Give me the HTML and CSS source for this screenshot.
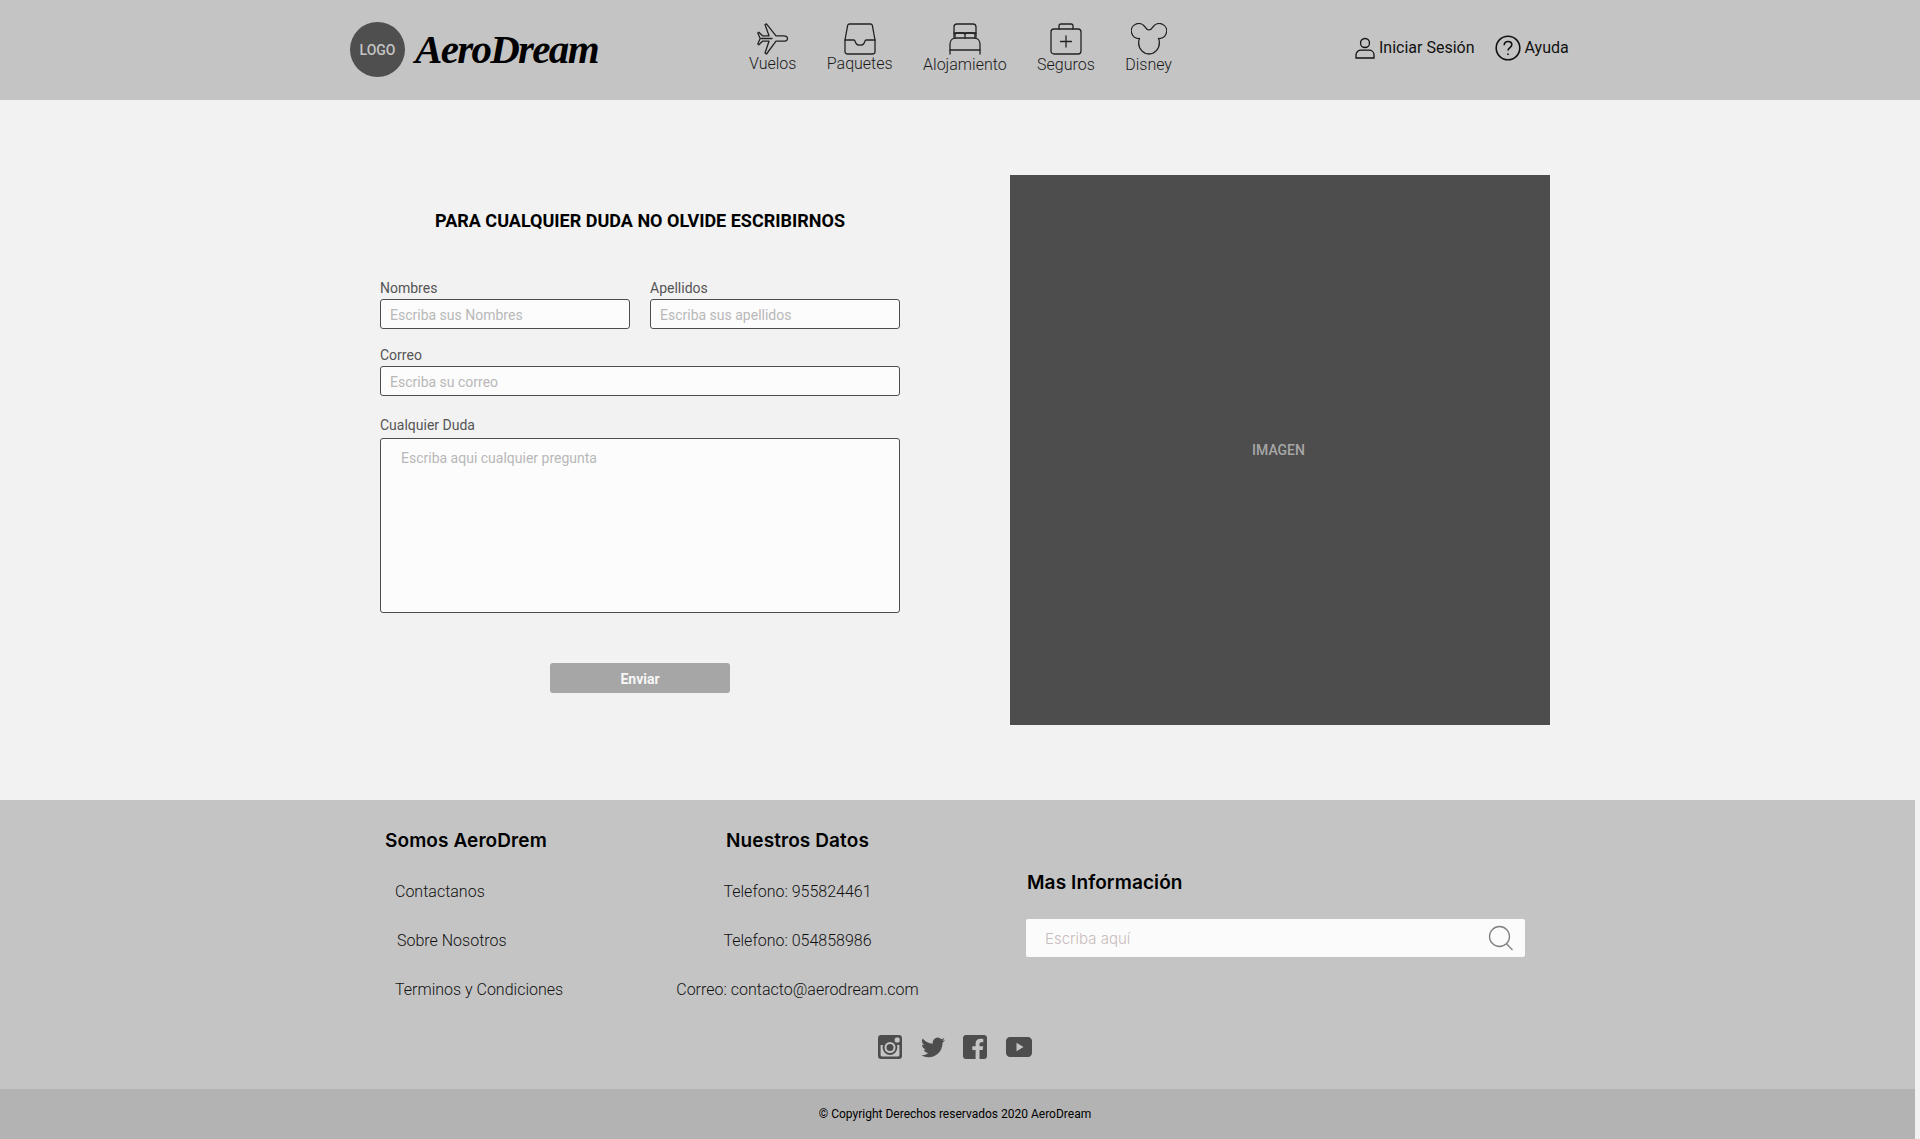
FILE: index.html
```html
<!DOCTYPE html>
<html lang="es">
<head>
<meta charset="utf-8">
<title>AeroDream</title>
<link rel="stylesheet" href="styles.css">
</head>
<body>
<header class="topbar">
  <div class="brand">
    <div class="logo">LOGO</div>
    <div class="wordmark">AeroDream</div>
  </div>
  <nav class="nav">
    <a class="nav-item">
      <svg class="nav-icon" width="32" height="32" viewBox="0 0 32 32"><path d="M30.5 15.5C30.5 13.6 28.5 12.8 26.5 12.8H19L9.5.8 8 1.5l4 11.3H5.5L1.8 9.2.8 10l2.4 5.5L.8 21l1 .8 3.7-3.6H12L8 30l1.5 1L19 18.2h7.5c2 0 4-.8 4-2.700z"/><path d="M4 15.500h11"/></svg>
      <span>Vuelos</span>
    </a>
    <a class="nav-item">
      <svg class="nav-icon" width="32" height="32" viewBox="0 0 32 32"><path d="M5.500 1h21c1 0 1.700.7 1.900 1.700L31 17v11.500c0 1.400-1.100 2.500-2.500 2.500h-25C2.100 31 1 29.900 1 28.500V17L3.600 2.700C3.800 1.700 4.500 1 5.500 1z"/><path d="M1 17h8.500c1 0 1.500.6 1.700 1.500.6 2.300 2.500 3.700 4.800 3.700s4.200-1.400 4.800-3.700c.2-.9.7-1.500 1.700-1.500H31"/></svg>
      <span>Paquetes</span>
    </a>
    <a class="nav-item nav-low">
      <svg class="nav-icon" width="32" height="32" viewBox="0 0 32 32"><path d="M5 14V4c0-1.700 1.300-3 3-3h16c1.700 0 3 1.300 3 3v10"/><path d="M5 10h22"/><path d="M6 15v-3c0-1.100.9-2 2-2h6c1.100 0 2 .9 2 2v3M16 15v-3c0-1.100.9-2 2-2h6c1.100 0 2 .9 2 2v3"/><path d="M1 31V21c0-3.500 2.500-6 6-6h18c3.500 0 6 2.500 6 6v10"/><path d="M1 27h30"/></svg>
      <span>Alojamiento</span>
    </a>
    <a class="nav-item nav-low">
      <svg class="nav-icon" width="32" height="32" viewBox="0 0 32 32"><rect x="1" y="6" width="30" height="25" rx="3"/><path d="M9 6V3c0-1.100.9-2 2-2h10c1.100 0 2 .9 2 2v3"/><path d="M16 13v11M10.500 18.500h11"/></svg>
      <span>Seguros</span>
    </a>
    <a class="nav-item nav-low">
      <svg class="nav-icon" width="36" height="32" viewBox="0 0 36 32"><path d="M8.500 15.500A7.500 7.500 0 1 1 14 3.800c1.200 2 2.500 3 4 3s2.800-1 4-3a7.500 7.500 0 1 1 5.500 11.700c.6 1.300.9 2.500.9 4C28.400 26 23.800 31 18 31S7.600 26 7.600 19.500c0-1.500.3-2.700.9-4z"/></svg>
      <span>Disney</span>
    </a>
  </nav>
  <div class="account">
    <a class="account-item">
      <svg width="20" height="22" viewBox="0 0 20 22"><circle cx="10" cy="6" r="4.500"/><path d="M1 21v-3c0-3 2.500-4.800 5-4.800h8c2.500 0 5 1.800 5 4.800v3z"/></svg>
      <span>Iniciar Sesión</span>
    </a>
    <a class="account-item account-help">
      <svg width="26" height="26" viewBox="0 0 26 26"><circle cx="13" cy="13" r="11.800"/><path d="M9.200 10.200c0-2.200 1.700-3.700 3.900-3.700s3.700 1.400 3.700 3.300c0 2.700-3.800 2.900-3.800 5.800"/><path d="M13 18.500v1.600"/></svg>
      <span>Ayuda</span>
    </a>
  </div>
</header>

<main class="content">
  <section class="contact">
    <h1 class="contact-title">PARA CUALQUIER DUDA NO OLVIDE ESCRIBIRNOS</h1>
    <form class="form">
      <div class="row">
        <label class="field"><span class="label">Nombres</span><input class="input" placeholder="Escriba sus Nombres"></label>
        <label class="field"><span class="label">Apellidos</span><input class="input" placeholder="Escriba sus apellidos"></label>
      </div>
      <label class="field field-mail"><span class="label">Correo</span><input class="input" placeholder="Escriba su correo"></label>
      <label class="field field-doubt"><span class="label">Cualquier Duda</span><textarea class="textarea" placeholder="Escriba aqui cualquier pregunta"></textarea></label>
      <button class="submit" type="button">Enviar</button>
    </form>
  </section>
  <div class="picture">IMAGEN</div>
</main>

<footer class="footer">
  <div class="footer-cols">
    <div class="col col-about">
      <h2 class="col-title">Somos AeroDrem</h2>
      <a class="link">Contactanos</a>
      <a class="link link-shift">Sobre Nosotros</a>
      <a class="link">Terminos y Condiciones</a>
    </div>
    <div class="col col-data">
      <h2 class="col-title">Nuestros Datos</h2>
      <a class="link">Telefono: 955824461</a>
      <a class="link">Telefono: 054858986</a>
      <a class="link">Correo: contacto@aerodream.com</a>
    </div>
    <div class="col col-info">
      <h2 class="col-title">Mas Información</h2>
      <div class="search">
        <input class="search-input" placeholder="Escriba aquí">
        <svg width="26" height="26" viewBox="0 0 26 26"><circle cx="11.500" cy="11.500" r="10"/><path d="M18.500 18.800 24.500 25"/></svg>
      </div>
    </div>
  </div>
  <div class="social">
    <svg width="24" height="24" viewBox="0 0 24 24"><path fill-rule="evenodd" d="M3 0h18c1.700 0 3 1.300 3 3v18c0 1.700-1.300 3-3 3H3c-1.700 0-3-1.300-3-3V3C0 1.300 1.300 0 3 0zm15.500 2.500a1.800 1.800 0 0 0-1.800 1.800v1.400c0 1 .8 1.800 1.800 1.800h1.400c1 0 1.800-.8 1.800-1.800V4.300c0-1-.8-1.800-1.800-1.800zM12 7a5.500 5.500 0 1 0 0 11 5.500 5.500 0 0 0 0-11zM2.600 10v10c0 .8.600 1.400 1.400 1.400h16c.8 0 1.400-.6 1.400-1.400V10h-2.500c.3.800.5 1.600.5 2.500a7.400 7.400 0 1 1-14.800 0c0-.9.200-1.700.5-2.500z"/><circle cx="12" cy="12.500" r="3.500"/></svg>
    <svg width="24" height="24" viewBox="0 0 24 24"><path d="M24 4.900c-.9.400-1.800.7-2.800.8 1-.6 1.800-1.600 2.200-2.700-1 .6-2 1-3.100 1.200A4.900 4.900 0 0 0 11.900 8.700 14 14 0 0 1 1.700 3.500a4.900 4.900 0 0 0 1.500 6.600c-.8 0-1.600-.2-2.200-.6 0 2.400 1.700 4.500 4 5-.7.200-1.500.2-2.200.1.600 2 2.400 3.400 4.600 3.400A9.900 9.900 0 0 1 0 20.100 14 14 0 0 0 7.500 22.300c9.100 0 14.300-7.700 14-14.600 1-.7 1.800-1.600 2.500-2.800z"/></svg>
    <svg width="24" height="24" viewBox="0 0 24 24"><path d="M3 0h18c1.700 0 3 1.300 3 3v18c0 1.700-1.300 3-3 3h-4.500v-9h3.200l.5-3.700h-3.700V9c0-1.100.4-1.800 1.800-1.800h2V3.900c-.4-.1-1.500-.2-2.900-.2-2.900 0-4.800 1.800-4.800 4.900v2.700H9.300V15h3.300v9H3c-1.700 0-3-1.300-3-3V3C0 1.300 1.300 0 3 0z"/></svg>
    <svg width="26" height="20" viewBox="0 0 26 20"><path fill-rule="evenodd" d="M4 0h18c2.200 0 4 1.800 4 4v12c0 2.200-1.800 4-4 4H4c-2.200 0-4-1.800-4-4V4c0-2.200 1.800-4 4-4zm6.500 5.800v8.400l7-4.200z"/></svg>
  </div>
</footer>
<div class="legal">© Copyright Derechos reservados 2020 AeroDream</div>
</body>
</html>
```
FILE: styles.css
```css
* { box-sizing: border-box; }
html, body { margin: 0; padding: 0; }
body {
  width: 1920px;
  height: 1139px;
  overflow: hidden;
  background: #f2f2f2;
  color: #000;
  font-family: Roboto, "Liberation Sans", sans-serif;
}

/* Header */
.topbar {
  height: 100px;
  background: #c4c4c4;
  padding-left: 350px;
  display: grid;
  grid-template-columns: 399px 606px auto;
  align-items: start;
}
.brand { display: flex; align-items: center; gap: 10px; padding-top: 22px; }
.logo {
  width: 55px;
  height: 55px;
  border-radius: 50%;
  background: #4f4f4f;
  color: #c4c4c4;
  font-size: 14px;
  font-weight: 500;
  display: flex;
  align-items: center;
  justify-content: center;
}
.wordmark {
  font-family: "Liberation Serif", serif;
  font-style: italic;
  font-weight: 700;
  font-size: 41px;
  letter-spacing: -1.700px;
  line-height: 55px;
  color: #000;
}
.nav { display: flex; gap: 30.400px; padding-top: 23px; }
.nav-item {
  display: flex;
  flex-direction: column;
  align-items: center;
  font-size: 16px;
  font-weight: 300;
  line-height: 19px;
  color: #1a1a1a;
}
.nav-icon { margin-bottom: -1px; fill: none; stroke: #222; stroke-width: 1.300; stroke-linejoin: round; stroke-linecap: round; }
.nav-low span { position: relative; top: 1px; }
.account { display: flex; gap: 20px; padding-top: 34px; }
.account-item {
  display: flex;
  align-items: center;
  gap: 4px;
  font-size: 16px;
  line-height: 24px;
  color: #111;
}
.account-help { margin-top: 1px; }
.account svg { fill: none; stroke: #111; stroke-width: 1.300; }
.account-help svg { stroke-width: 1.600; }

/* Main */
.content {
  height: 700px;
  padding: 75px 0 0 380px;
  display: flex;
  gap: 110px;
}
.contact { width: 520px; }
.contact-title {
  margin: 0;
  padding-top: 35px;
  font-size: 18px;
  line-height: 22px;
  font-weight: 700;
  text-align: center;
  color: #000;
}
.form { display: flex; flex-direction: column; margin-top: 48px; }
.row { display: flex; gap: 20px; }
.row .field { flex: 0 0 250px; }
.field { display: flex; flex-direction: column; }
.field-mail { margin-top: 18px; }
.field-doubt { margin-top: 21px; }
.field-doubt .label { margin-bottom: 5px; }
.label {
  font-size: 14px;
  line-height: 16px;
  color: #555;
  margin-bottom: 3px;
}
.input, .textarea {
  display: block;
  width: 100%;
  border: 1px solid #4d4d4d;
  border-radius: 3px;
  background: #fcfcfc;
  font-family: Roboto, sans-serif;
  font-size: 14px;
  font-weight: 400;
  color: #333;
  outline: none;
}
.input { height: 30px; padding: 1px 9px 0; }
.textarea { height: 175px; padding: 11px 20px; resize: none; line-height: 16px; }
.input::placeholder, .textarea::placeholder { color: #b8b8b8; opacity: 1; }
.submit {
  align-self: center;
  width: 180px;
  height: 30px;
  margin-top: 50px;
  padding: 2px 0 0;
  border: 0;
  border-radius: 3px;
  background: #a6a6a6;
  color: #f7f7f7;
  font-family: Roboto, sans-serif;
  font-size: 14px;
  font-weight: 700;
}
.picture {
  width: 540px;
  height: 550px;
  padding-right: 3px;
  background: #4d4d4d;
  color: #a6a6a6;
  font-size: 14px;
  font-weight: 500;
  display: flex;
  align-items: center;
  justify-content: center;
}

/* Footer */
.footer {
  width: 1915px;
  height: 289px;
  background: #c4c4c4;
}
.footer-cols { display: flex; height: 230px; padding-left: 385px; }
.col { display: flex; flex-direction: column; }
.col-title {
  margin: 0;
  font-family: Inter, "Open Sans", sans-serif;
  font-size: 19px;
  font-weight: 600;
  line-height: 24px;
  color: #000;
  letter-spacing: .1px;
}
.col-about { width: 291px; padding-top: 29px; }
.col-data { width: 351px; padding-top: 29px; align-items: center; padding-right: 108px; }
.col-info { padding-top: 71px; width: 499px; }
.link {
  font-size: 16px;
  font-weight: 300;
  line-height: 20px;
  color: #111;
  margin-top: 29px;
  white-space: nowrap;
}
.col-about .link { padding-left: 10px; }
.col-about .link.link-shift { padding-left: 12px; }
.search {
  width: 499px;
  height: 38px;
  margin-top: 24px;
  margin-left: -1px;
  background: #fbfbfb;
  border-radius: 2px;
  display: flex;
  align-items: center;
  padding: 0 11px 0 19px;
}
.search-input {
  flex: 1;
  min-width: 0;
  border: 0;
  background: transparent;
  outline: none;
  font-family: Inter, sans-serif;
  font-size: 15px;
  font-weight: 300;
  padding: 0;
}
.search-input::placeholder { color: #c9bcbc; opacity: 1; }
.search svg { fill: none; stroke: #808080; stroke-width: 1.300; }
.social {
  display: flex;
  align-items: center;
  gap: 18.500px;
  padding-left: 878px;
  height: 24px;
  margin-top: 5px;
}
.social svg { fill: #4d4d4d; }
.legal {
  height: 50px;
  background: #b3b3b3;
  color: #000;
  font-size: 12px;
  line-height: 50px;
  text-align: center;
  width: 1915px;
  padding-right: 5px;
}
```
